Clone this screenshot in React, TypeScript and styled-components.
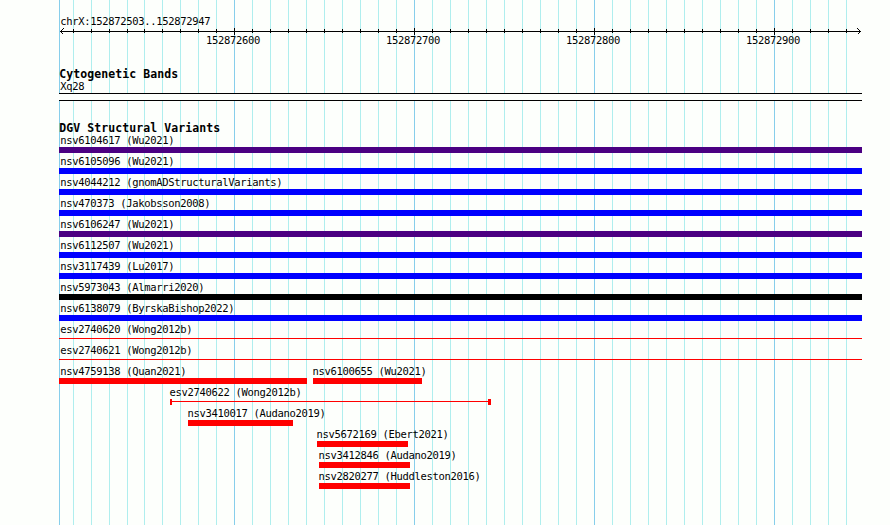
import React from "react";
import styled, { createGlobalStyle } from "styled-components";

const GlobalStyle = createGlobalStyle`
  body {
    margin: 0;
    background: #fdfffc;
  }
`;

const LEFT = 59;
const WIDTH = 803;

interface Feature {
  name: string;
  start: number;
  end: number;
  color?: string;
  kind?: "bar" | "line" | "span";
}

const rows: Feature[][] = [
  [{ name: "nsv6104617 (Wu2021)", start: 59, end: 862, color: "#4b0082" }],
  [{ name: "nsv6105096 (Wu2021)", start: 59, end: 862, color: "#0000ff" }],
  [{ name: "nsv4044212 (gnomADStructuralVariants)", start: 59, end: 862, color: "#0000ff" }],
  [{ name: "nsv470373 (Jakobsson2008)", start: 59, end: 862, color: "#0000ff" }],
  [{ name: "nsv6106247 (Wu2021)", start: 59, end: 862, color: "#4b0082" }],
  [{ name: "nsv6112507 (Wu2021)", start: 59, end: 862, color: "#0000ff" }],
  [{ name: "nsv3117439 (Lu2017)", start: 59, end: 862, color: "#0000ff" }],
  [{ name: "nsv5973043 (Almarri2020)", start: 59, end: 862, color: "#000000" }],
  [{ name: "nsv6138079 (ByrskaBishop2022)", start: 59, end: 862, color: "#0000ff" }],
  [{ name: "esv2740620 (Wong2012b)", start: 59, end: 862, kind: "line" }],
  [{ name: "esv2740621 (Wong2012b)", start: 59, end: 862, kind: "line" }],
  [
    { name: "nsv4759138 (Quan2021)", start: 59, end: 307 },
    { name: "nsv6100655 (Wu2021)", start: 313, end: 422 },
  ],
  [{ name: "esv2740622 (Wong2012b)", start: 170, end: 491, kind: "span" }],
  [{ name: "nsv3410017 (Audano2019)", start: 188, end: 293 }],
  [{ name: "nsv5672169 (Ebert2021)", start: 317, end: 408 }],
  [{ name: "nsv3412846 (Audano2019)", start: 319, end: 410 }],
  [{ name: "nsv2820277 (Huddleston2016)", start: 319, end: 410 }],
];

// minor ticks are 10bp apart, 18px each once past the first few
const ticks = [73, 91, 109, 127, ...Array.from({ length: 40 }, (_, i) => 144 + i * 18)];
const majors = [
  { x: 234, label: "152872600" },
  { x: 414, label: "152872700" },
  { x: 594, label: "152872800" },
  { x: 774, label: "152872900" },
];
const isMajor = (x: number) => majors.some((m) => m.x === x);

const Browser = styled.div`
  position: relative;
  box-sizing: border-box;
  width: 890px;
  height: 525px;
  padding: 15px 0 0 ${LEFT}px;
  overflow: hidden;
  color: #000;
  font-family: "DejaVu Sans Mono", monospace;
  font-size: 10.5px;
  letter-spacing: -0.322px;
  line-height: 12px;
  white-space: pre;
`;

const Grid = styled.svg`
  position: absolute;
  top: 0;
  left: 0;
`;

const Content = styled.div`
  position: relative;
  display: flex;
  flex-direction: column;
  width: ${WIDTH}px;
`;

const Region = styled.div`
  height: 12px;
  padding-left: 1.3px;
`;

const Axis = styled.svg`
  display: block;
  height: 9px;
`;

const Scale = styled.div`
  display: flex;
  height: 12px;
  margin-top: -2px;
  padding-left: 147px;
`;

const ScaleLabel = styled.div`
  flex: none;
  width: 180px;
`;

const TrackTitle = styled.div<{ $gap: number }>`
  height: 12px;
  margin-top: ${(p) => p.$gap}px;
  padding-left: 0.3px;
  font-size: 11.5px;
  font-weight: bold;
  letter-spacing: 0.077px;
`;

const BandName = styled.div`
  height: 13px;
  padding-left: 1.3px;
`;

const Band = styled.div`
  box-sizing: border-box;
  height: 8px;
  border: solid #000;
  border-width: 1px 0;
  background: #fdfffc;
`;

const Row = styled.div`
  display: flex;
  height: 21px;
`;

const Item = styled.div`
  flex: none;
`;

const Label = styled.div<{ $shift: number }>`
  height: 13px;
  margin-left: ${(p) => p.$shift}px;
`;

const Glyph = styled.div<{ $kind: string; $color: string }>`
  box-sizing: border-box;
  height: ${(p) => (p.$kind === "line" ? 1 : 6)}px;
  margin-top: ${(p) => (p.$kind === "line" ? 2 : 0)}px;
  background: ${(p) => (p.$kind === "span" ? "none" : p.$color)};
  ${(p) =>
    p.$kind === "span" &&
    `
    padding-top: 2px;
    border: solid ${p.$color};
    border-width: 0 3px 0 2px;
    &::before {
      content: "";
      display: block;
      height: 1px;
      background: ${p.$color};
    }
  `}
`;

const FeatureRow = ({ features }: { features: Feature[] }) => (
  <Row>
    {features.map((f, i) => {
      const prev = i === 0 ? LEFT : features[i - 1].end;
      return (
        <Item key={f.name} style={{ marginLeft: f.start - prev, width: f.end - f.start }}>
          <Label $shift={f.start === LEFT ? 1.3 : -0.5}>{f.name}</Label>
          <Glyph $kind={f.kind ?? "bar"} $color={f.color ?? "#ff0000"} />
        </Item>
      );
    })}
  </Row>
);

const App = () => (
  <>
    <GlobalStyle />
    <Browser>
      <Grid width="890" height="525" shapeRendering="crispEdges">
        <rect x={LEFT} y="0" width="1" height="525" fill="#87ceeb" />
        {ticks.map((x) => (
          <rect key={x} x={x} y="0" width="1" height="525" fill={isMajor(x) ? "#87ceeb" : "#afeeee"} />
        ))}
      </Grid>
      <Content>
        <Region>chrX:152872503..152872947</Region>
        <Axis width={WIDTH} height="9" viewBox="59 27 803 9" shapeRendering="crispEdges">
          <rect x="60" y="31" width="801" height="1" />
          {ticks.map((x) => (
            <rect key={x} x={x} y={isMajor(x) ? 28 : 29} width="1" height={isMajor(x) ? 7 : 4} />
          ))}
          <path d="M63.5 28.5L60.5 31.5L63.5 34.5M857.5 28.5L860.5 31.5L857.5 34.5" fill="none" stroke="#000" />
        </Axis>
        <Scale>
          {majors.map((m) => (
            <ScaleLabel key={m.x}>{m.label}</ScaleLabel>
          ))}
        </Scale>
        <TrackTitle $gap={22}>Cytogenetic Bands</TrackTitle>
        <BandName>Xq28</BandName>
        <Band />
        <TrackTitle $gap={21}>DGV Structural Variants</TrackTitle>
        {rows.map((r) => (
          <FeatureRow key={r[0].name} features={r} />
        ))}
      </Content>
    </Browser>
  </>
);

export default App;
